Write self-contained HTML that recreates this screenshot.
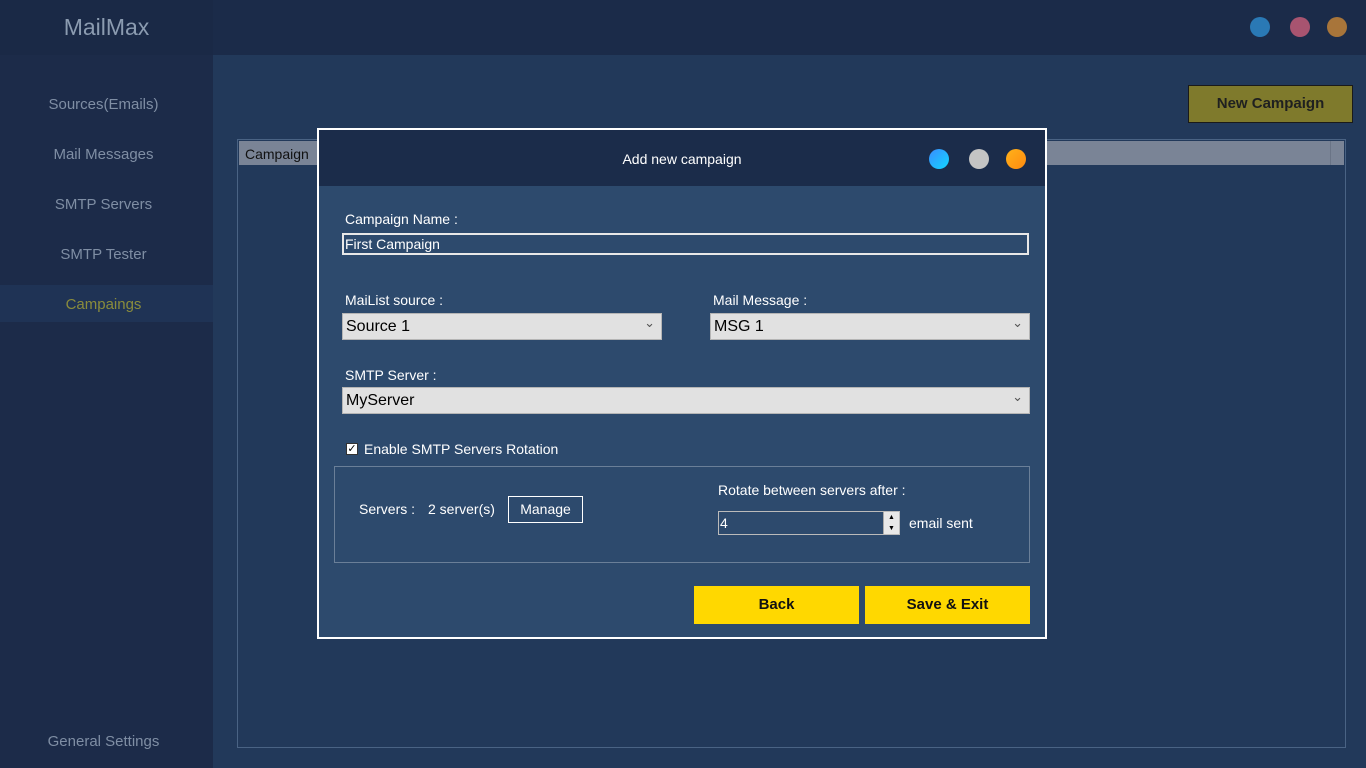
<!DOCTYPE html>
<html><head><meta charset="utf-8"><style>
*{margin:0;padding:0;box-sizing:border-box}
body{width:1366px;height:768px;background:#22395a;font-family:"Liberation Sans",sans-serif;position:relative;overflow:hidden}
.a{position:absolute}
.top{left:0;top:0;width:1366px;height:55px;background:#1b2b49}
.logo{left:0;top:0;width:209px;height:55px;background:#1a2946;color:#8b9bb0;font-size:23px;text-align:center;line-height:55px}
.side{left:0;top:55px;width:213px;height:713px;background:#1c2b49}
.nav{left:0;width:207px;text-align:center;color:#7f8ea4;font-size:15px}
.dot{width:20px;height:20px;border-radius:50%}
.lbl{color:#fff;font-size:15px}
.sel{background:#e1e1e1;border:1px solid #b5b5b5;color:#000;font-size:16px;padding-left:3px;line-height:25px;height:27px}
.sel:after{content:"⌄";position:absolute;right:6px;top:-4px;font-size:13px;color:#555}
.yb{background:#ffd800;color:#111;font-weight:bold;font-size:15px;text-align:center;line-height:38px;font-family:"Liberation Sans",sans-serif}
</style></head><body>
<div class="a top"></div>
<div class="a side"></div>
<div class="a logo" style="width:213px">MailMax</div>
<div class="a" style="left:0;top:285px;width:213px;height:37px;background:#1f3355"></div>
<div class="a nav" style="top:96px">Sources(Emails)</div>
<div class="a nav" style="top:146px">Mail Messages</div>
<div class="a nav" style="top:196px">SMTP Servers</div>
<div class="a nav" style="top:246px">SMTP Tester</div>
<div class="a nav" style="top:296px;color:#8a8c3c">Campaings</div>
<div class="a nav" style="top:733px">General Settings</div>
<div class="a dot" style="left:1250px;top:17px;background:#2a79b5"></div>
<div class="a dot" style="left:1290px;top:17px;background:#a85470"></div>
<div class="a dot" style="left:1327px;top:17px;background:#a8753a"></div>
<div class="a" style="left:1188px;top:85px;width:165px;height:38px;background:#7f7a2c;border:1px solid #1a1a1a;color:#1f2020;font-weight:bold;font-size:15px;text-align:center;line-height:36px;font-family:'Liberation Sans',sans-serif">New Campaign</div>
<div class="a" style="left:237px;top:139px;width:1109px;height:609px;border:1px solid #4a6384"></div>
<div class="a" style="left:239px;top:141px;width:1105px;height:24px;background:#7a8496"></div>
<div class="a" style="left:1330px;top:141px;width:1px;height:24px;background:#6a7486"></div>
<div class="a" style="left:245px;top:146px;font-size:14px;color:#111">Campaign</div>
<!-- dialog -->
<div class="a" style="left:317px;top:128px;width:730px;height:511px;border:2px solid #fff;background:#2d4a6d"></div>
<div class="a" style="left:319px;top:130px;width:726px;height:56px;background:#1b2c4a"></div>
<div class="a" style="left:319px;top:151px;width:726px;text-align:center;color:#fff;font-size:14px">Add new campaign</div>
<div class="a dot" style="left:929px;top:149px;background:linear-gradient(135deg,#3a8dff,#12d6ff)"></div>
<div class="a dot" style="left:969px;top:149px;background:#c4c4c4"></div>
<div class="a dot" style="left:1006px;top:149px;background:linear-gradient(135deg,#ffb21a,#ff8a10)"></div>
<div class="a lbl" style="left:345px;top:211px;font-size:14px">Campaign Name :</div>
<div class="a" style="left:342px;top:233px;width:687px;height:22px;border:2px solid #e8e8e8;color:#fff;font-size:14px;padding-left:1px;line-height:18px">First Campaign</div>
<div class="a lbl" style="left:345px;top:292px;font-size:14px">MaiList source :</div>
<div class="a lbl" style="left:713px;top:292px;font-size:14px">Mail Message :</div>
<div class="a sel" style="left:342px;top:313px;width:320px">Source 1</div>
<div class="a sel" style="left:710px;top:313px;width:320px">MSG 1</div>
<div class="a lbl" style="left:345px;top:367px;font-size:14px">SMTP Server :</div>
<div class="a sel" style="left:342px;top:387px;width:688px">MyServer</div>
<div class="a" style="left:346px;top:443px;width:12px;height:12px;background:#fff;border:1px solid #333;font-size:11px;line-height:10px;text-align:center;color:#000">✓</div>
<div class="a lbl" style="left:364px;top:441px;font-size:14px">Enable SMTP Servers Rotation</div>
<div class="a" style="left:334px;top:466px;width:696px;height:97px;border:1px solid #6a7f98"></div>
<div class="a lbl" style="left:359px;top:501px;font-size:14px">Servers :</div>
<div class="a lbl" style="left:428px;top:501px;font-size:14px">2 server(s)</div>
<div class="a lbl" style="left:508px;top:496px;width:75px;height:27px;border:1px solid #fff;text-align:center;line-height:25px;font-size:14px">Manage</div>
<div class="a lbl" style="left:718px;top:482px;font-size:14px">Rotate between servers after :</div>
<div class="a" style="left:718px;top:511px;width:182px;height:24px;border:1px solid #bbb;color:#fff;font-size:14px;line-height:22px;padding-left:1px">4</div>
<div class="a" style="left:883px;top:512px;width:16px;height:22px;background:#e8e8e8;border-left:1px solid #aaa;font-size:7px;color:#000;text-align:center;line-height:11px">▲<br>▼</div>
<div class="a lbl" style="left:909px;top:515px;font-size:14px">email sent</div>
<div class="a yb" style="left:694px;top:586px;width:165px;height:38px">Back</div>
<div class="a yb" style="left:865px;top:586px;width:165px;height:38px">Save &amp; Exit</div>
</body></html>
